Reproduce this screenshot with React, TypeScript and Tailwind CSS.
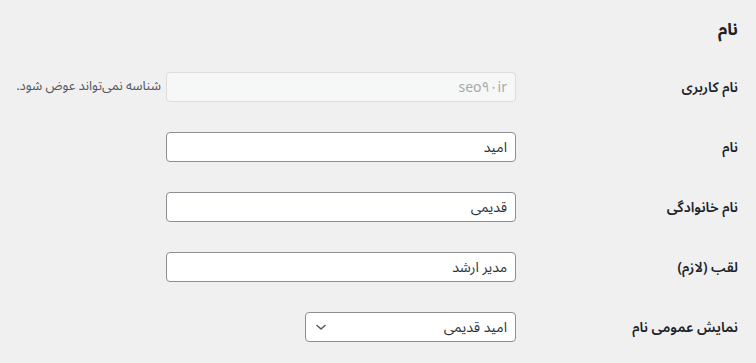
import React from "react";

const font = { fontFamily: '"Noto Sans Arabic", "DejaVu Sans", "Noto Sans", sans-serif' };

function Row({ label, children }: { label: string; children: React.ReactNode }) {
  return (
    <div className="flex h-[60px] items-center">
      <div className="w-[222px] shrink-0 text-[14px] font-semibold text-[#1d2327]">{label}</div>
      <div className="flex items-center gap-[5px]">{children}</div>
    </div>
  );
}

function TextInput({ value }: { value: string }) {
  return (
    <div className="flex h-[30px] w-[350px] items-center rounded-[4px] border border-[#8c8f94] bg-white px-[8px] text-[14px] text-[#2c3338]">
      {value}
    </div>
  );
}

export default function App() {
  return (
    <div dir="rtl" className="h-[363px] w-[756px] overflow-hidden bg-[#f0f0f1] pr-[18px]" style={font}>
      <div className="flex h-[57px] items-center pt-[5px]">
        <h2 className="text-[17px] font-bold text-[#1d2327]">نام</h2>
      </div>
      <Row label="نام کاربری">
        <div className="flex h-[30px] w-[350px] items-center rounded-[4px] border border-[#dcdcde] bg-[#f6f7f7] px-[8px] text-[14px] text-[#a7aaad]">
          seo۹۰ir
        </div>
        <span className="text-[13px] text-[#50575e]">شناسه نمی‌تواند عوض شود.</span>
      </Row>
      <Row label="نام">
        <TextInput value="امید" />
      </Row>
      <Row label="نام خانوادگی">
        <TextInput value="قدیمی" />
      </Row>
      <Row label="لقب (لازم)">
        <TextInput value="مدیر ارشد" />
      </Row>
      <Row label="نمایش عمومی نام">
        <div className="flex h-[30px] w-[211px] items-center justify-between rounded-[4px] border border-[#8c8f94] bg-white pl-[9px] pr-[8px] text-[14px] text-[#2c3338]">
          <span>امید قدیمی</span>
          <svg width="12" height="12" viewBox="0 0 12 12" fill="none">
            <path d="M2 4.5 L6 8 L10 4.5" stroke="#50575e" strokeWidth="1.5" strokeLinecap="round" strokeLinejoin="round" />
          </svg>
        </div>
      </Row>
    </div>
  );
}
